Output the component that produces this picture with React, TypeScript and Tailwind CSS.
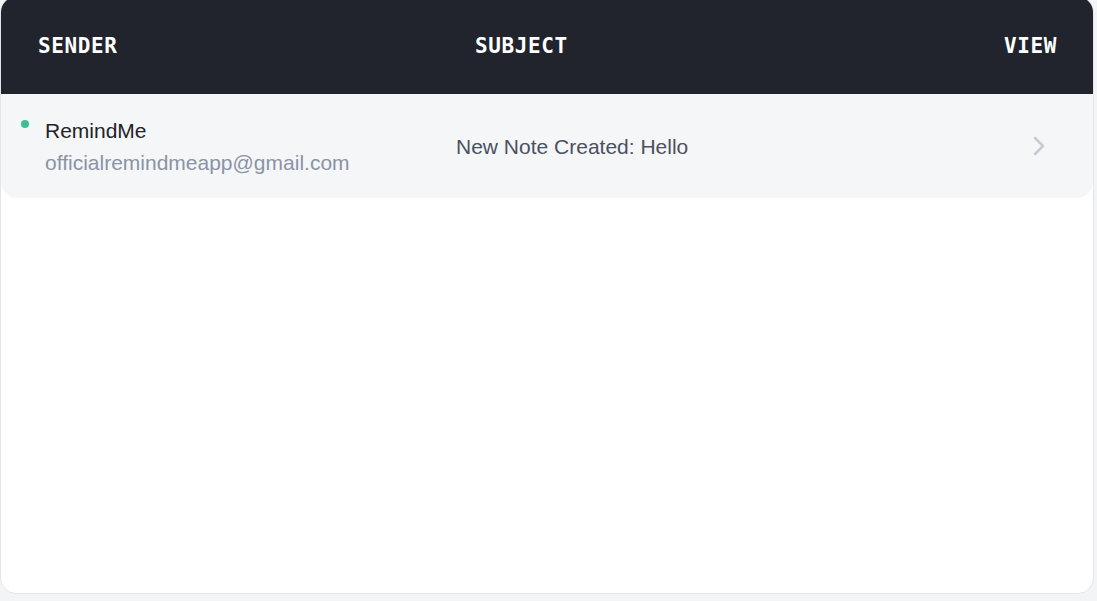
import React from "react";

type Mail = { sender: string; email: string; subject: string; unread: boolean };

const mails: Mail[] = [
  { sender: "RemindMe", email: "officialremindmeapp@gmail.com", subject: "New Note Created: Hello", unread: true },
];

export default function App() {
  return (
    <div className="min-h-screen w-full overflow-hidden bg-[#f3f4f6] font-['Liberation_Sans',Arial,sans-serif]">
      <div className="-mt-[4px] h-[598px] w-[1094px] overflow-hidden rounded-2xl border border-[#e4e5ec] bg-white">
        <div className="flex h-[97px] items-center bg-[#21242c] pl-[37px] pr-[36px] pt-[3px] font-['DejaVu_Sans_Mono',monospace] text-[21px] font-bold tracking-[0.6px] text-white">
          <div className="w-[437px]">SENDER</div>
          <div className="flex-1">SUBJECT</div>
          <div>VIEW</div>
        </div>
        {mails.map((m, i) => (
          <div key={i} className="flex h-[104px] items-center rounded-b-2xl bg-[#f5f6f8] pl-[20px] pr-[48px] pt-[2px] text-[21px]">
            <div className="flex w-[435px] items-start">
              <span className={"mt-[5px] h-2 w-2 shrink-0 rounded-full " + (m.unread ? "bg-[#3bbf93]" : "bg-transparent")} />
              <div className="ml-4 flex flex-col leading-[32px]">
                <span className="text-[#1f2328]">{m.sender}</span>
                <span className="text-[#8b93a6]">{m.email}</span>
              </div>
            </div>
            <div className="flex-1 text-[#4b5160]">{m.subject}</div>
            <svg width="12" height="20" viewBox="0 0 12 20" fill="none" className="-mt-[2px] shrink-0">
              <polyline points="2,2 10,10 2,18" stroke="#c8c9d3" strokeWidth="2.5" strokeLinecap="round" strokeLinejoin="round" />
            </svg>
          </div>
        ))}
      </div>
    </div>
  );
}
